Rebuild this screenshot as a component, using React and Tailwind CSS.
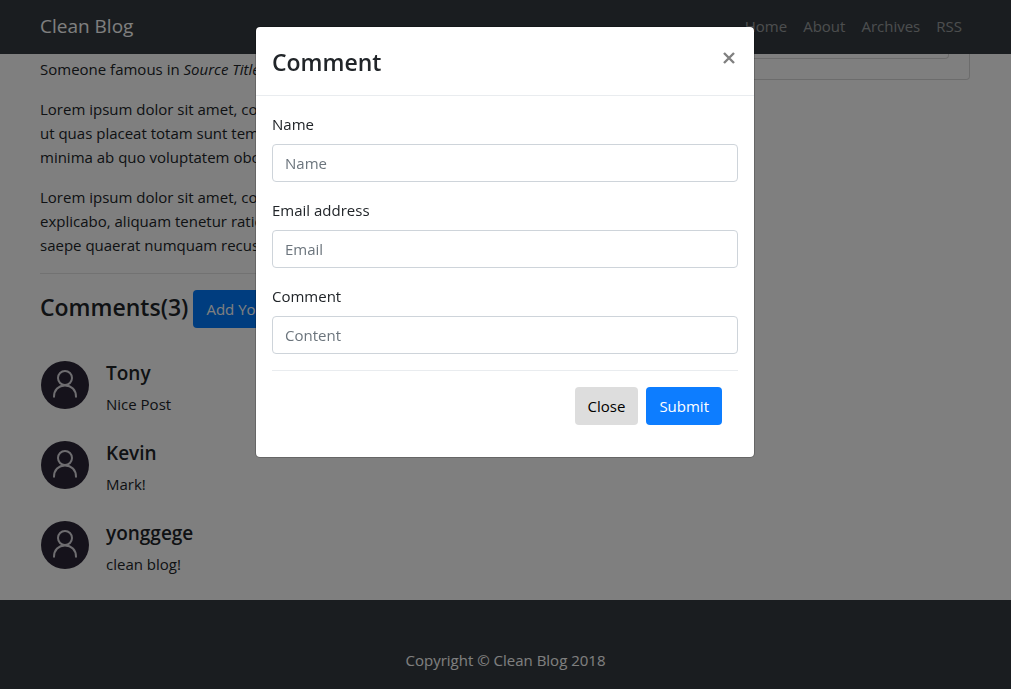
import React from "react";

const comments = [
  { name: "Tony", text: "Nice Post" },
  { name: "Kevin", text: "Mark!" },
  { name: "yonggege", text: "clean blog!" },
];

const fields = [
  { id: "name", label: "Name", placeholder: "Name", type: "text" },
  { id: "email", label: "Email address", placeholder: "Email", type: "email" },
  { id: "content", label: "Comment", placeholder: "Content", type: "text" },
];

function Avatar() {
  return (
    <svg viewBox="0 0 50 50" className="size-[50px] shrink-0" fill="none" aria-hidden="true">
      <circle cx="25" cy="25" r="24" fill="#2a2436" />
      <g stroke="#dcdae0" strokeWidth="2" strokeLinecap="round">
        <circle cx="25" cy="18" r="7" />
        <path d="M14 36.700C14 30 18.600 25.400 25 25.400s11 4.600 11 11.300" />
      </g>
    </svg>
  );
}

function Navbar() {
  return (
    <header className="bg-[#343a40]">
      <div className="mx-auto flex h-[54px] w-full max-w-[961px] items-center justify-between pr-4 pb-0.5 pl-[15px]">
        <a href="#" className="text-[19px] leading-7 text-white">Clean Blog</a>
        <nav className="flex gap-4 pr-2 text-white/50">
          <a href="#">Home</a>
          <a href="#">About</a>
          <a href="#">Archives</a>
          <a href="#">RSS</a>
        </nav>
      </div>
    </header>
  );
}

function CommentDialog() {
  return (
    <div className="fixed inset-0 z-10 bg-black/50 pt-[26px] pr-[17px] pl-4">
      <div
        role="dialog"
        aria-labelledby="dialog-title"
        className="mx-auto max-w-[500px] rounded-[5px] border border-black/20 bg-white bg-clip-padding"
      >
        <div className="flex items-start justify-between border-b border-[#e9ecef] px-4 pt-[17px] pb-[15px]">
          <h2 id="dialog-title" className="text-[23px] leading-9 font-semibold">Comment</h2>
          <button type="button" aria-label="Close dialog" className="flex h-7 w-[18px] items-center justify-center text-[#808080]">
            <svg viewBox="0 0 12 12" className="size-3" stroke="currentColor" strokeWidth="2.4" aria-hidden="true">
              <path d="M1 1l10 10M11 1L1 11" />
            </svg>
          </button>
        </div>
        <form className="p-4">
          {fields.map((f) => (
            <div key={f.id} className="mb-4">
              <label htmlFor={f.id} className="mb-2 block">{f.label}</label>
              <input
                id={f.id}
                type={f.type}
                placeholder={f.placeholder}
                className="block h-[38px] w-full rounded border border-[#ced4da] bg-white px-3 placeholder:text-[#6c757d]"
              />
            </div>
          ))}
          <div className="flex justify-end gap-2 border-t border-[#e9ecef] p-4">
            <button type="button" className="h-[38px] rounded bg-[#dddddd] px-[13px] text-black">Close</button>
            <button type="submit" className="h-[38px] rounded bg-[#0d7dff] px-[13px] text-white">Submit</button>
          </div>
        </form>
      </div>
    </div>
  );
}

export default function App() {
  return (
    <div className="flex min-h-screen flex-col bg-white font-['Open_Sans',sans-serif] text-[15px] leading-6 text-[#212529]">
      <Navbar />
      <main className="mx-auto flex w-full max-w-[961px] items-start gap-[30px] pr-4 pb-[30px] pl-[15px]">
        <div className="min-w-0 flex-[2] pt-[3px]">
          <p className="mb-4">
            Someone famous in <cite>Source Title</cite>
          </p>
          <p className="mb-4 sm:whitespace-nowrap">
            Lorem ipsum dolor sit amet, consectetur adipisicing elit. Error, nostrum, aliquid, animi,
            <br />
            ut quas placeat totam sunt tempora commodi nihil ullam alias modi dicta saepe
            <br />
            minima ab quo voluptatem obcaecati?
          </p>
          <p className="mb-4 sm:whitespace-nowrap">
            Lorem ipsum dolor sit amet, consectetur adipisicing elit. Harum, dolor quis. Sunt, ut,
            <br />
            explicabo, aliquam tenetur ratione tempore quidem voluptates cupiditate voluptas
            <br />
            saepe quaerat numquam recusandae? Qui, necessitatibus, est!
          </p>
          <section className="border-t border-black/10 pt-4">
            <div className="mb-8 flex gap-[5px]">
              <h2 className="text-[23px] leading-[34px] font-semibold">Comments(3)</h2>
              <button type="button" className="h-[38px] rounded bg-[#007bff] px-[13px] text-white">
                Add Your Comment
              </button>
            </div>
            <ul className="flex flex-col gap-[30px]">
              {comments.map((c) => (
                <li key={c.name} className="flex h-[50px] gap-4">
                  <Avatar />
                  <div>
                    <h3 className="mb-[6px] text-[19px] leading-[26px] font-semibold">{c.name}</h3>
                    <p>{c.text}</p>
                  </div>
                </li>
              ))}
            </ul>
          </section>
        </div>
        <aside className="flex-1 rounded-b border border-t-0 border-black/15 px-5 pb-5">
          <div className="h-[5px] rounded-b border border-t-0 border-black/15" />
        </aside>
      </main>
      <footer className="grow bg-[#343a40] pt-12 text-center text-white">
        <p>Copyright © Clean Blog 2018</p>
      </footer>
      <CommentDialog />
    </div>
  );
}
